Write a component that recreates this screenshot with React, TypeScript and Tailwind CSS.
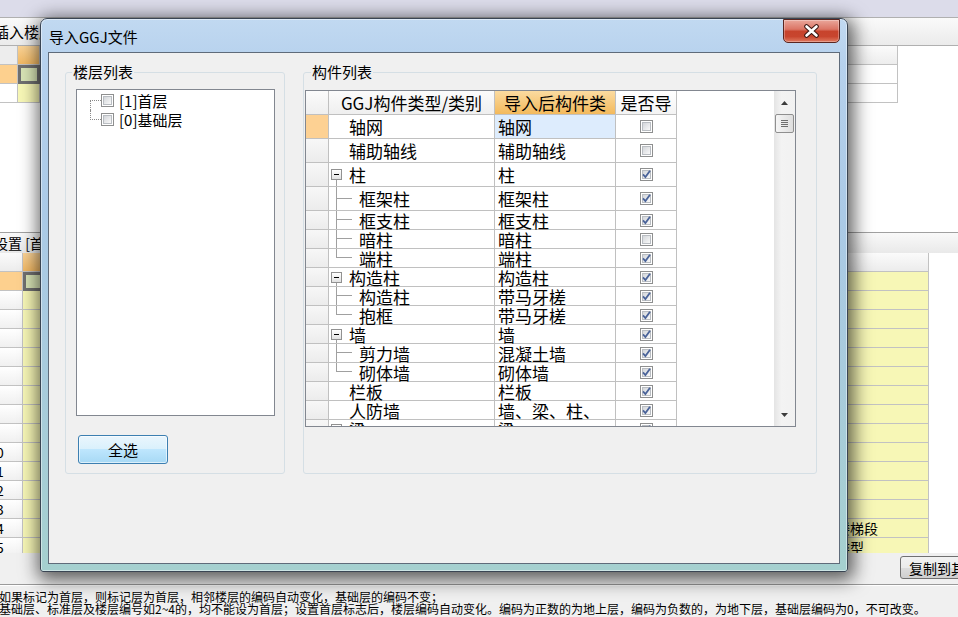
import React from "react";

const CJK = "font-['Noto_Sans_CJK_SC',sans-serif]";

type Kind = "leaf" | "parent" | "child";

type Part = {
  name: string;
  target: string;
  kind: Kind;
  last?: boolean;
  checked: boolean;
  tall?: boolean;
};

const parts: Part[] = [
  { name: "轴网", target: "轴网", kind: "leaf", checked: false, tall: true },
  { name: "辅助轴线", target: "辅助轴线", kind: "leaf", checked: false, tall: true },
  { name: "柱", target: "柱", kind: "parent", checked: true, tall: true },
  { name: "框架柱", target: "框架柱", kind: "child", checked: true, tall: true },
  { name: "框支柱", target: "框支柱", kind: "child", checked: true },
  { name: "暗柱", target: "暗柱", kind: "child", checked: false },
  { name: "端柱", target: "端柱", kind: "child", last: true, checked: true },
  { name: "构造柱", target: "构造柱", kind: "parent", checked: true },
  { name: "构造柱", target: "带马牙槎", kind: "child", checked: true },
  { name: "抱框", target: "带马牙槎", kind: "child", last: true, checked: true },
  { name: "墙", target: "墙", kind: "parent", checked: true },
  { name: "剪力墙", target: "混凝土墙", kind: "child", checked: true },
  { name: "砌体墙", target: "砌体墙", kind: "child", last: true, checked: true },
  { name: "栏板", target: "栏板", kind: "leaf", checked: true },
  { name: "人防墙", target: "墙、梁、柱、", kind: "leaf", checked: true },
  { name: "梁", target: "梁", kind: "parent", checked: true },
];

const floors = ["[1]首层", "[0]基础层"];

const notes: Record<number, string> = { 14: "楼梯段", 15: "类型" };

function CheckBox({ checked = false }: { checked?: boolean }) {
  return (
    <span className="flex h-[13px] w-[13px] shrink-0 items-center justify-center border border-[#8e8f8f] bg-white">
      <span className="flex h-[9px] w-[9px] items-center justify-center border border-[#b9bdc2] bg-[linear-gradient(135deg,#d3d6da,#f9f9f9)]">
        {checked && (
          <svg width="9" height="9" viewBox="0 0 9 9" className="overflow-visible">
            <path d="M1 4.4 L3.4 7 L8 0.8" fill="none" stroke="#4a6399" strokeWidth="1.8" />
          </svg>
        )}
      </span>
    </span>
  );
}

function Minus() {
  return (
    <span className="flex h-[11px] w-[11px] shrink-0 items-center justify-center border border-[#919191] bg-[linear-gradient(to_bottom,#ffffff,#e2e2e2)]">
      <span className="h-[1px] w-[5px] bg-black" />
    </span>
  );
}

function TreeCell({ p }: { p: Part }) {
  if (p.kind === "leaf") {
    return <span className="self-center pl-[20px]">{p.name}</span>;
  }
  if (p.kind === "parent") {
    return (
      <>
        <div className="ml-[2px] flex w-[11px] flex-col">
          <div className="flex-1" />
          <Minus />
          <div className="ml-[5px] flex-1 border-l border-[#a0a0a0]" />
        </div>
        <span className="ml-[7px] self-center">{p.name}</span>
      </>
    );
  }
  return (
    <>
      <div className="ml-[7px] flex w-[16px] flex-col">
        <div className="h-1/2 border-b border-l border-[#a0a0a0]" />
        <div className={`flex-1 ${p.last ? "" : "border-l border-[#a0a0a0]"}`} />
      </div>
      <span className="ml-[7px] self-center">{p.name}</span>
    </>
  );
}

function Arrow({ up }: { up?: boolean }) {
  return (
    <svg width="7" height="4" viewBox="0 0 7 4">
      <path d={up ? "M0 4 L3.5 0 L7 4 Z" : "M0 0 L3.5 4 L7 0 Z"} fill="#3c3c3c" />
    </svg>
  );
}

function PartsTable() {
  return (
    <div className="flex h-[337px] w-[491px] border border-[#828790] bg-white text-[17px] leading-none">
      <div className="flex flex-1 flex-col overflow-hidden">
        <div className="flex h-[24px] shrink-0">
          <div className="w-[23px] border-b border-r border-[#c0c0c0] bg-[linear-gradient(to_bottom,#fbfbfb,#efefef)]" />
          <div className="flex w-[166px] items-center justify-center whitespace-nowrap border-b border-r border-[#c0c0c0] bg-[linear-gradient(to_bottom,#fbfbfb,#efefef)]">
            GGJ构件类型/类别
          </div>
          <div className="flex w-[121px] items-center justify-center whitespace-nowrap border-b border-r border-[#c0c0c0] bg-[linear-gradient(to_bottom,#fbdba0,#f3b95c)]">
            导入后构件类
          </div>
          <div className="flex w-[61px] items-center justify-center whitespace-nowrap border-b border-r border-[#c0c0c0] bg-[linear-gradient(to_bottom,#ffffff,#f4f4f4)]">
            是否导
          </div>
        </div>
        {parts.map((p, i) => (
          <div key={i} className={`flex shrink-0 ${p.tall ? "h-[24px]" : "h-[19px]"}`}>
            <div
              className={`w-[23px] border-b border-r border-[#c0c0c0] ${
                i === 0 ? "bg-[#fdd193]" : "bg-[linear-gradient(to_bottom,#f7f7f7,#ececec)]"
              }`}
            />
            <div className="flex w-[166px] whitespace-nowrap border-b border-r border-[#c0c0c0]">
              <TreeCell p={p} />
            </div>
            <div
              className={`flex w-[121px] items-center whitespace-nowrap border-b border-r border-[#c0c0c0] pl-[3px] ${
                i === 0 ? "bg-[#ddecfd]" : ""
              }`}
            >
              {p.target}
            </div>
            <div className="flex w-[61px] items-center justify-center border-b border-r border-[#c0c0c0]">
              <CheckBox checked={p.checked} />
            </div>
          </div>
        ))}
      </div>
      <div className="flex w-[21px] flex-col bg-[linear-gradient(to_right,#e4e4e4,#f3f3f3_35%,#f1f1f1)]">
        <div className="flex h-[23px] items-center justify-center">
          <Arrow up />
        </div>
        <div className="mx-[1px] flex h-[19px] flex-col items-center justify-center gap-[1px] rounded-[2px] border border-[#8f8f8f] bg-[linear-gradient(to_right,#f5f5f5,#dedede)]">
          <span className="h-[1px] w-[7px] bg-[#6e6e6e]" />
          <span className="h-[1px] w-[7px] bg-[#6e6e6e]" />
          <span className="h-[1px] w-[7px] bg-[#6e6e6e]" />
          <span className="h-[1px] w-[7px] bg-[#6e6e6e]" />
        </div>
        <div className="flex-1" />
        <div className="flex h-[23px] items-center justify-center">
          <Arrow />
        </div>
      </div>
    </div>
  );
}

function FloorTree() {
  return (
    <div className="h-[327px] w-[199px] border border-[#828790] bg-white pt-[1px] text-[15px] leading-none">
      {floors.map((f, i) => (
        <div key={f} className="flex h-[19px] pl-[13px]">
          <div className="flex w-[11px] flex-col">
            <div className={`h-1/2 border-b border-dotted border-[#8a8a8a] ${i > 0 ? "border-l" : ""}`} />
            <div className={`flex-1 border-dotted border-[#8a8a8a] ${i === 0 ? "border-l" : ""}`} />
          </div>
          <div className="flex items-center">
            <CheckBox />
            <span className="ml-[5px] whitespace-nowrap">{f}</span>
          </div>
        </div>
      ))}
    </div>
  );
}

function CloseButton() {
  return (
    <div className="flex h-[24px] w-[57px] items-center justify-center rounded-[0_0_5px_5px] border border-[#5a2620] bg-[linear-gradient(to_bottom,#eaa79b_0%,#db7565_42%,#c7432c_52%,#c8452e_75%,#e07a60_100%)] shadow-[inset_0_0_0_1px_rgba(255,255,255,0.3)]">
      <svg width="17" height="14" viewBox="0 0 17 14">
        <path d="M3.5 2.5 L13.5 11.5 M13.5 2.5 L3.5 11.5" stroke="#3a1712" strokeWidth="4.6" strokeLinecap="round" />
        <path d="M3.5 2.5 L13.5 11.5 M13.5 2.5 L3.5 11.5" stroke="#ffffff" strokeWidth="2.6" strokeLinecap="round" />
      </svg>
    </div>
  );
}

function Dialog() {
  return (
    <div className="absolute left-[40px] top-[18px] flex h-[554px] w-[808px] flex-col rounded-[7px_7px_3px_3px] border border-[#3a4553] bg-[linear-gradient(to_bottom,#c1d9f1_0%,#b6d1ed_8%,#abcae7_35%,#a8cbdc_65%,#a5d0cf_100%)] px-[7px] pb-[7px] shadow-[inset_0_0_0_1px_rgba(255,255,255,0.45),2px_4px_18px_4px_rgba(0,0,0,0.62)]">
      <div className="flex h-[33px] shrink-0 items-start justify-between">
        <span className="mt-[9px] pl-[1px] text-[15px] leading-[17px]">导入GGJ文件</span>
        <CloseButton />
      </div>
      <div className="flex flex-1 gap-[18px] border border-[#5f6b7a] bg-[#f0f0f0] pl-[16px] pt-[19px]">
        <div className="relative h-[402px] w-[220px] shrink-0 rounded-[3px] border border-[#d5dfe5] pl-[10px] pt-[16px]">
          <span className="absolute left-[6px] top-[-10px] bg-[#f0f0f0] px-[1px] text-[15px] leading-[17px]">楼层列表</span>
          <FloorTree />
          <button
            type="button"
            className="ml-[2px] mt-[19px] flex h-[29px] w-[90px] items-center justify-center rounded-[3px] border border-[#3c7fb1] bg-[linear-gradient(to_bottom,#eaf6fd_0%,#d9f0fc_50%,#bee6fd_50%,#a7d9f5_100%)] text-[15px] leading-none shadow-[inset_0_0_0_1px_rgba(255,255,255,0.6)]"
          >
            全选
          </button>
        </div>
        <div className="relative h-[402px] w-[514px] shrink-0 rounded-[3px] border border-[#d5dfe5] pl-[1px] pt-[17px]">
          <span className="absolute left-[7px] top-[-10px] bg-[#f0f0f0] px-[1px] text-[15px] leading-[17px]">构件列表</span>
          <PartsTable />
        </div>
      </div>
    </div>
  );
}

function Background() {
  const rows = Array.from({ length: 15 }, (_, i) => i + 1);
  return (
    <div className="flex flex-col">
      <div className="h-[17px] shrink-0 bg-[#dcdcea]" />
      <div className="flex h-[29px] shrink-0 items-center border-y border-[#b0b0b0] bg-[linear-gradient(to_bottom,#fafafa,#ebebeb)]">
        <span className="ml-[-6px] whitespace-nowrap text-[15px] leading-none">插入楼层</span>
      </div>
      {[0, 1, 2].map((i) => (
        <div key={i} className="flex h-[19px] shrink-0">
          <div
            className={`w-[18px] border-b border-r border-[#c2c2c2] ${
              i === 0 ? "bg-[#ededed]" : i === 1 ? "bg-[#fdd08e]" : "bg-white"
            }`}
          />
          <div
            className={`w-[22px] ${
              i === 0
                ? "border-b border-r border-[#c2c2c2] bg-[linear-gradient(to_bottom,#fad397,#f1b863)]"
                : i === 1
                  ? "border-[3px] border-[#707070] bg-[#d8e4b5]"
                  : "border-b border-r border-[#c2c2c2] bg-[#f7f7b6]"
            }`}
          />
          <div
            className={`w-[858px] border-b border-r border-[#c2c2c2] ${
              i === 0 ? "bg-[linear-gradient(to_bottom,#fbfbfb,#ededed)]" : "bg-white"
            }`}
          />
          <div className="flex-1 bg-white" />
        </div>
      ))}
      <div className="h-[129px] shrink-0 bg-white" />
      <div className="flex h-[21px] shrink-0 items-center border-t border-[#a0a0a0] bg-[linear-gradient(to_bottom,#f9f9f9,#e9e9e9)]">
        <span className="ml-[-34px] whitespace-nowrap text-[14px] leading-none">楼层设置 [首层]</span>
      </div>
      <div className="flex h-[300px] shrink-0 flex-col overflow-hidden bg-white text-[14px] leading-none">
        <div className="flex h-[19px] shrink-0">
          <div className="ml-[-30px] w-[53px] border-b border-r border-[#c2c2c2] bg-[linear-gradient(to_bottom,#fbfbfb,#ececec)]" />
          <div className="w-[813px] border-b border-r border-[#c2c2c2] bg-[linear-gradient(to_bottom,#fad397,#f1b863)]" />
          <div className="w-[93px] border-b border-r border-[#c2c2c2] bg-[linear-gradient(to_bottom,#fbfbfb,#ececec)]" />
        </div>
        {rows.map((n) => (
          <div key={n} className="flex h-[19px] shrink-0">
            <div
              className={`ml-[-30px] flex w-[53px] items-center justify-center border-b border-r border-[#c2c2c2] ${
                n === 1 ? "bg-[#fdd08e]" : "bg-[linear-gradient(to_bottom,#ffffff,#f0f0f0)]"
              }`}
            >
              {n}
            </div>
            <div
              className={`w-[813px] ${
                n === 1
                  ? "border-[3px] border-[#707070] bg-[#d8e4b5]"
                  : "border-b border-r border-[#c2c2c2] bg-[#f7f7b6]"
              }`}
            />
            <div className="flex w-[93px] items-center whitespace-nowrap border-b border-r border-[#c2c2c2] bg-[#f7f7b6]">
              {notes[n] ?? ""}
            </div>
          </div>
        ))}
      </div>
      <div className="flex h-[31px] shrink-0 pl-[900px] pt-[3px]">
        <button
          type="button"
          className="flex h-[23px] w-[110px] shrink-0 items-center whitespace-nowrap rounded-[3px] border border-[#707070] bg-[linear-gradient(to_bottom,#f2f2f2_0%,#ebebeb_50%,#dddddd_50%,#cfcfcf_100%)] pl-[8px] text-[14px] leading-none"
        >
          复制到其他楼层
        </button>
      </div>
      <div className="h-[33px] shrink-0 overflow-hidden whitespace-nowrap border-t border-[#9a9a9a] pt-[6px] text-[12px] leading-[12px] shadow-[inset_0_1px_0_#ffffff]">
        <div className="ml-[-1px]">如果标记为首层，则标记层为首层，相邻楼层的编码自动变化，基础层的编码不变；</div>
        <div className="ml-[-1px]">
          基础层、标准层及楼层编号如2~4的，均不能设为首层；设置首层标志后，楼层编码自动变化。编码为正数的为地上层，编码为负数的，为地下层，基础层编码为0，不可改变。
        </div>
      </div>
    </div>
  );
}

export default function App() {
  return (
    <div className={`relative h-[617px] w-[958px] overflow-hidden bg-[#f0f0f0] text-black ${CJK}`}>
      <Background />
      <Dialog />
    </div>
  );
}
